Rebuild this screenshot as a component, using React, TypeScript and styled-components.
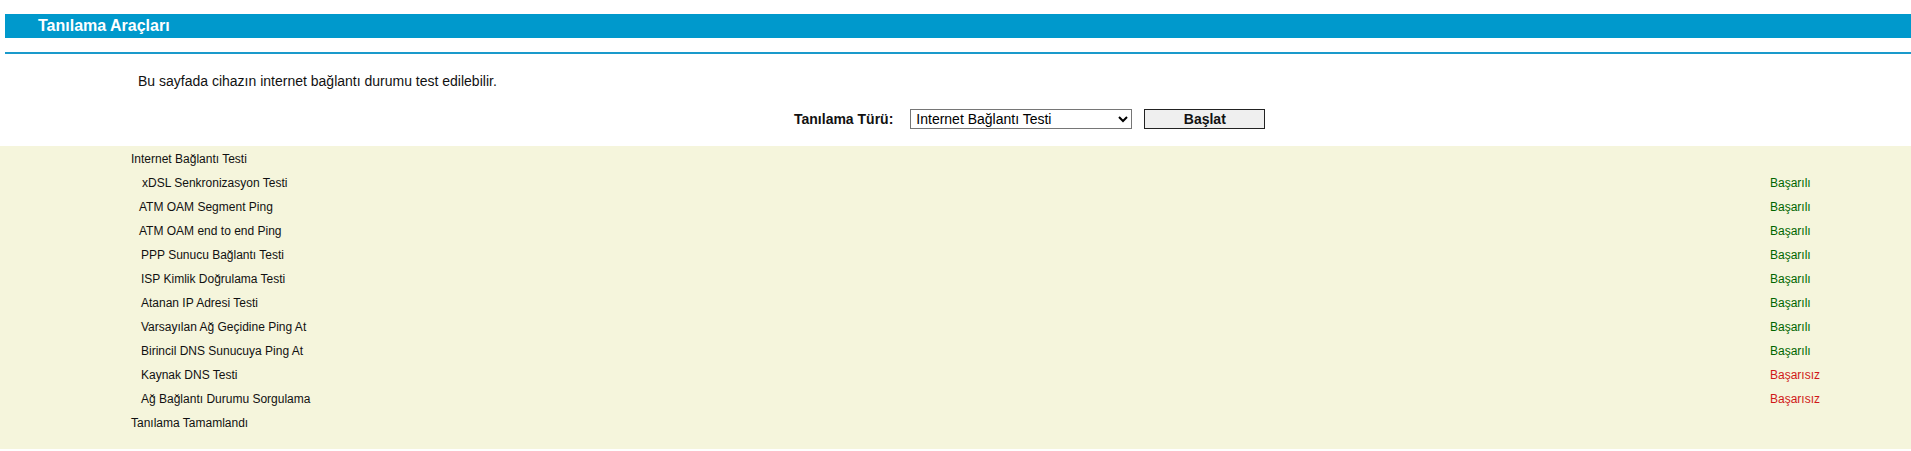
import styled, { createGlobalStyle } from 'styled-components';

const GlobalStyle = createGlobalStyle`
  html, body {
    margin: 0;
    padding: 0;
    background: #ffffff;
    font-family: "Liberation Sans", Arial, sans-serif;
  }
`;

const TitleBar = styled.div`
  margin: 14px 0 0 5px;
  height: 24px;
  line-height: 24px;
  padding-left: 33px;
  background: #0099cc;
  color: #ffffff;
  font-size: 16px;
  font-weight: bold;
`;

const Divider = styled.div`
  margin: 14px 0 0 5px;
  height: 2px;
  background: #1a9acb;
`;

const Intro = styled.p`
  margin: 0;
  padding: 19px 0 0 138px;
  font-size: 14px;
  line-height: 16px;
  color: #111;
`;

const FormRow = styled.div`
  display: flex;
  align-items: center;
  padding: 20px 0 17px 794px;
  font-size: 14px;
`;

const FieldLabel = styled.label`
  font-weight: bold;
  color: #111;
  margin-right: 17px;
`;

const Select = styled.select`
  width: 222px;
  height: 20px;
  font-family: "Liberation Sans", Arial, sans-serif;
  font-size: 14px;
  border: 1px solid #767676;
  border-radius: 0;
  background: #ffffff;
  color: #000;
  padding: 0 1px;
  margin-right: 12px;
`;

const StartButton = styled.button`
  width: 121px;
  height: 20px;
  font-family: "Liberation Sans", Arial, sans-serif;
  font-size: 14px;
  font-weight: bold;
  background: #efefef;
  border: 1px solid #222;
  border-radius: 0;
  padding: 0;
  color: #111;
`;

const Results = styled.div`
  background: #f5f5dc;
  padding: 1px 0 14px 0;
  font-size: 12px;
  color: #111;
`;

const Row = styled.div`
  display: flex;
  align-items: center;
  height: 24px;
`;

const Name = styled.div<{ $indent: number }>`
  flex: 1;
  padding-left: ${(p) => 131 + p.$indent}px;
`;

const Status = styled.div<{ $ok: boolean }>`
  width: 141px;
  color: ${(p) => (p.$ok ? '#006600' : '#d01818')};
`;

const steps: { name: string; indent: number; ok: boolean }[] = [
  { name: 'xDSL Senkronizasyon Testi', indent: 11, ok: true },
  { name: 'ATM OAM Segment Ping', indent: 8, ok: true },
  { name: 'ATM OAM end to end Ping', indent: 8, ok: true },
  { name: 'PPP Sunucu Bağlantı Testi', indent: 10, ok: true },
  { name: 'ISP Kimlik Doğrulama Testi', indent: 10, ok: true },
  { name: 'Atanan IP Adresi Testi', indent: 10, ok: true },
  { name: 'Varsayılan Ağ Geçidine Ping At', indent: 10, ok: true },
  { name: 'Birincil DNS Sunucuya Ping At', indent: 10, ok: true },
  { name: 'Kaynak DNS Testi', indent: 10, ok: false },
  { name: 'Ağ Bağlantı Durumu Sorgulama', indent: 10, ok: false },
];

export default function App() {
  return (
    <>
      <GlobalStyle />
      <TitleBar>Tanılama Araçları</TitleBar>
      <Divider />
      <Intro>Bu sayfada cihazın internet bağlantı durumu test edilebilir.</Intro>
      <FormRow>
        <FieldLabel>Tanılama Türü:</FieldLabel>
        <Select defaultValue="inet">
          <option value="inet">Internet Bağlantı Testi</option>
        </Select>
        <StartButton>Başlat</StartButton>
      </FormRow>
      <Results>
        <Row>
          <Name $indent={0}>Internet Bağlantı Testi</Name>
        </Row>
        {steps.map((s) => (
          <Row key={s.name}>
            <Name $indent={s.indent}>{s.name}</Name>
            <Status $ok={s.ok}>{s.ok ? 'Başarılı' : 'Başarısız'}</Status>
          </Row>
        ))}
        <Row>
          <Name $indent={0}>Tanılama Tamamlandı</Name>
        </Row>
      </Results>
    </>
  );
}
